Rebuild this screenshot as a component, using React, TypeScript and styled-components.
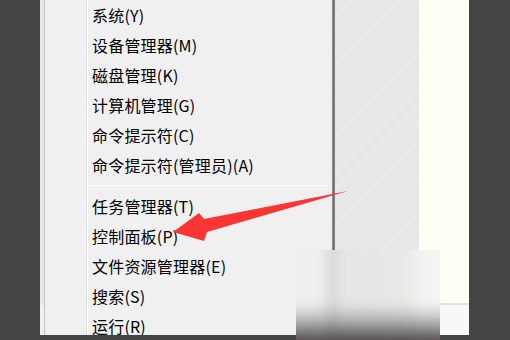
import React from "react";
import styled, { createGlobalStyle } from "styled-components";

const Global = createGlobalStyle`
  html, body { margin: 0; padding: 0; background: #444444; }
  body { width: 510px; height: 340px; overflow: hidden; }
  #root { width: 510px; height: 340px; }
`;

const Page = styled.div`
  position: relative;
  width: 510px;
  height: 340px;
  background: #444444;
  display: flex;
  flex-direction: column;
  overflow: hidden;
`;

const Main = styled.div`
  display: flex;
  height: 335px;
`;

const DarkSide = styled.div<{ $w: number }>`
  width: ${(p) => p.$w}px;
  flex: none;
  background: #444444;
`;

const BottomBand = styled.div`
  height: 5px;
  background: #444444;
`;

const Menu = styled.div`
  width: 295px;
  flex: none;
  display: flex;
  background: #f0f0f0;
`;

const LeftEdge = styled.div`
  width: 4px;
  flex: none;
  background: linear-gradient(to bottom, #e6e6e6 0, #e6e6e6 305px, #efefef 305px);
  border-right: 1px solid #c6c6c6;
`;

const Gutter = styled.div`
  width: 41px;
  flex: none;
  border-right: 1px solid #dedede;
  box-shadow: 1px 0 0 #ffffff;
`;

const Items = styled.div`
  flex: 1;
  display: flex;
  flex-direction: column;
  margin-left: 1px;
  margin-right: 4px;
`;

const Item = styled.div`
  height: 30px;
  line-height: 30px;
  padding-left: 4px;
  font-family: "Noto Sans CJK SC", "Noto Sans", sans-serif;
  font-size: 16px;
  letter-spacing: 0.2px;
  color: #000000;
  white-space: nowrap;
`;

const Separator = styled.div`
  height: 1px;
  margin: 5px 0 5px;
  background: #d9d9d9;
  border-bottom: 1px solid #ffffff;
`;

const RightEdge = styled.div`
  width: 3px;
  flex: none;
  background: linear-gradient(to right, #9a9a9a, #6e6e6e 50%, #8c8c8c);
`;

const Textured = styled.div`
  width: 84px;
  flex: none;
  background-color: #e8e8e8;
  background-image: repeating-linear-gradient(
    135deg,
    rgba(255, 255, 255, 0.22) 0px,
    rgba(255, 255, 255, 0.22) 1px,
    rgba(0, 0, 0, 0.012) 1px,
    rgba(0, 0, 0, 0.012) 3px
  );
`;

const Cream = styled.div`
  width: 50px;
  flex: none;
  display: flex;
  flex-direction: column;
`;

const CreamTop = styled.div`
  height: 303px;
  background: #fffff5;
  border-bottom: 2px solid #e2e2e0;
`;

const CreamBottom = styled.div`
  flex: 1;
  background: #f8f8fa;
`;

const Arrow = styled.svg`
  position: absolute;
  left: 0;
  top: 0;
  pointer-events: none;
`;

const Watermark = styled.div`
  position: absolute;
  left: 296px;
  top: 250px;
  width: 144px;
  height: 90px;
  overflow: hidden;
`;

const WatermarkBlur = styled.div`
  position: absolute;
  inset: -12px;
  filter: blur(6px);
  background:
    linear-gradient(to bottom, rgba(0,0,0,0) 0, rgba(0,0,0,0) 66px, rgba(90,90,90,0.3) 80px, rgba(60,60,60,0.6) 93px, rgba(60,50,50,0.85) 102px, rgba(60,50,50,0.95) 114px),
    linear-gradient(to right, #efefef 0, #efefef 40px, #cfcfcf 48px, #e6e6e6 56px, #e8e8e8 120px, #f4f4f2 140px, #f6f6f4 168px);
`;

const top = ["系统(Y)", "设备管理器(M)", "磁盘管理(K)", "计算机管理(G)", "命令提示符(C)", "命令提示符(管理员)(A)"];
const bottom = ["任务管理器(T)", "控制面板(P)", "文件资源管理器(E)", "搜索(S)", "运行(R)"];

export default function App() {
  return (
    <Page>
      <Global />
      <Main>
        <DarkSide $w={40} />
        <Menu>
          <LeftEdge />
          <Gutter />
          <Items>
            {top.map((t) => (
              <Item key={t}>{t}</Item>
            ))}
            <Separator />
            {bottom.map((t) => (
              <Item key={t}>{t}</Item>
            ))}
          </Items>
          <RightEdge />
        </Menu>
        <Textured />
        <Cream>
          <CreamTop />
          <CreamBottom />
        </Cream>
        <DarkSide $w={41} />
      </Main>
      <BottomBand />
      <Arrow width="510" height="340" viewBox="0 0 510 340">
        <polygon
          points="173,232 199,213 204,219 348,191 207,232 204,241"
          fill="#fb3434"
        />
      </Arrow>
      <Watermark>
        <WatermarkBlur />
      </Watermark>
    </Page>
  );
}
